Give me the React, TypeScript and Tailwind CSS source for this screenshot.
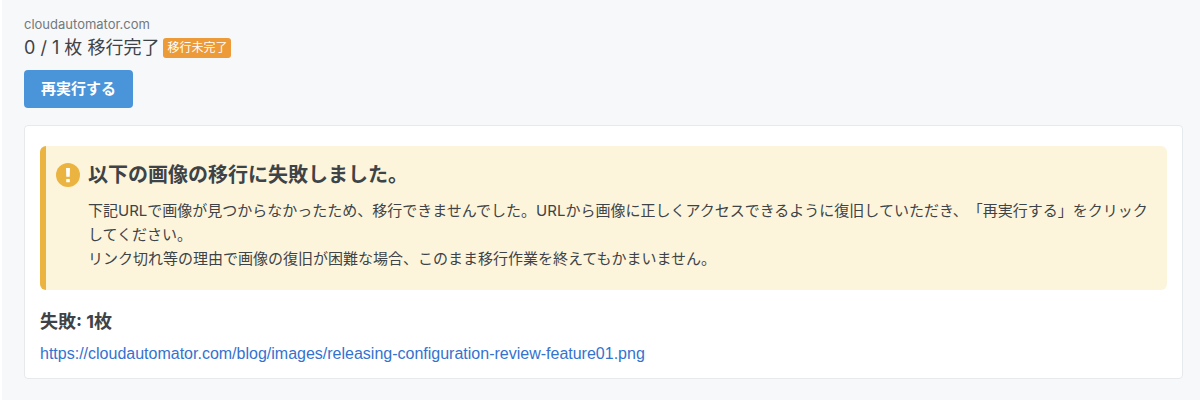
interface FailedImagesProps {
  urls: string[];
}

function WarningIcon() {
  return (
    <svg viewBox="0 0 24 24" className="mt-1 h-6 w-6 shrink-0" aria-hidden="true">
      <circle cx="12" cy="12" r="12" fill="#ebb440" />
      <path d="M10 4.9h4l-.3 8.9h-3.4z" fill="#fff" />
      <rect x="10.2" y="16" width="3.6" height="3.3" rx="0.5" fill="#fff" />
    </svg>
  );
}

function MigrationAlert() {
  return (
    <div
      role="alert"
      className="flex gap-2 rounded-md border-l-6 border-[#ebb440] bg-[#fcf5dc] pt-[13px] pr-4 pb-[19px] pl-[10px]"
    >
      <WarningIcon />
      <div>
        <h2 className="text-[20px] leading-8 font-bold">以下の画像の移行に失敗しました。</h2>
        <p className="mt-2 text-[15px] leading-6 [text-spacing-trim:space-all]">
          下記URLで画像が見つからなかったため、移行できませんでした。URLから画像に正しくアクセスできるように復旧していただき、「再実行する」をクリックしてください。
          <br />
          リンク切れ等の理由で画像の復旧が困難な場合、このまま移行作業を終えてもかまいません。
        </p>
      </div>
    </div>
  );
}

function FailedImages({ urls }: FailedImagesProps) {
  return (
    <section className="mt-4">
      <h3 className="text-[18px] leading-8 font-bold">失敗: {urls.length}枚</h3>
      <ul className="mt-1">
        {urls.map((url) => (
          <li key={url} className="font-['Liberation_Sans',sans-serif] text-[16px] leading-6">
            <a href={url} className="break-all text-[#3472cf] hover:underline">
              {url}
            </a>
          </li>
        ))}
      </ul>
    </section>
  );
}

export default function App() {
  return (
    <main
      lang="ja"
      className="min-h-screen border-l-2 border-white bg-[#f7f8fa] pt-3 pr-[17px] pb-5 pl-[22px] font-['Inter','Noto_Sans_CJK_JP',sans-serif] text-[#3e4347]"
    >
      <header>
        <p className="text-[13px] leading-6 text-[#72787d]">cloudautomator.com</p>
        <div className="flex items-center gap-1">
          <h1 className="text-[18px] leading-6">0 / 1 枚 移行完了</h1>
          <span className="rounded-[3px] bg-[#ed9a38] px-1 text-[12px] leading-5 text-white">
            移行未完了
          </span>
        </div>
        <button
          type="button"
          className="mt-[10px] rounded bg-[#4a94da] px-[17px] text-[15px] leading-[38px] font-bold text-white"
        >
          再実行する
        </button>
      </header>

      <div className="mt-[17px] rounded border border-[#e6eaed] bg-white px-[15px] pt-5 pb-3">
        <MigrationAlert />
        <FailedImages
          urls={["https://cloudautomator.com/blog/images/releasing-configuration-review-feature01.png"]}
        />
      </div>
    </main>
  );
}
